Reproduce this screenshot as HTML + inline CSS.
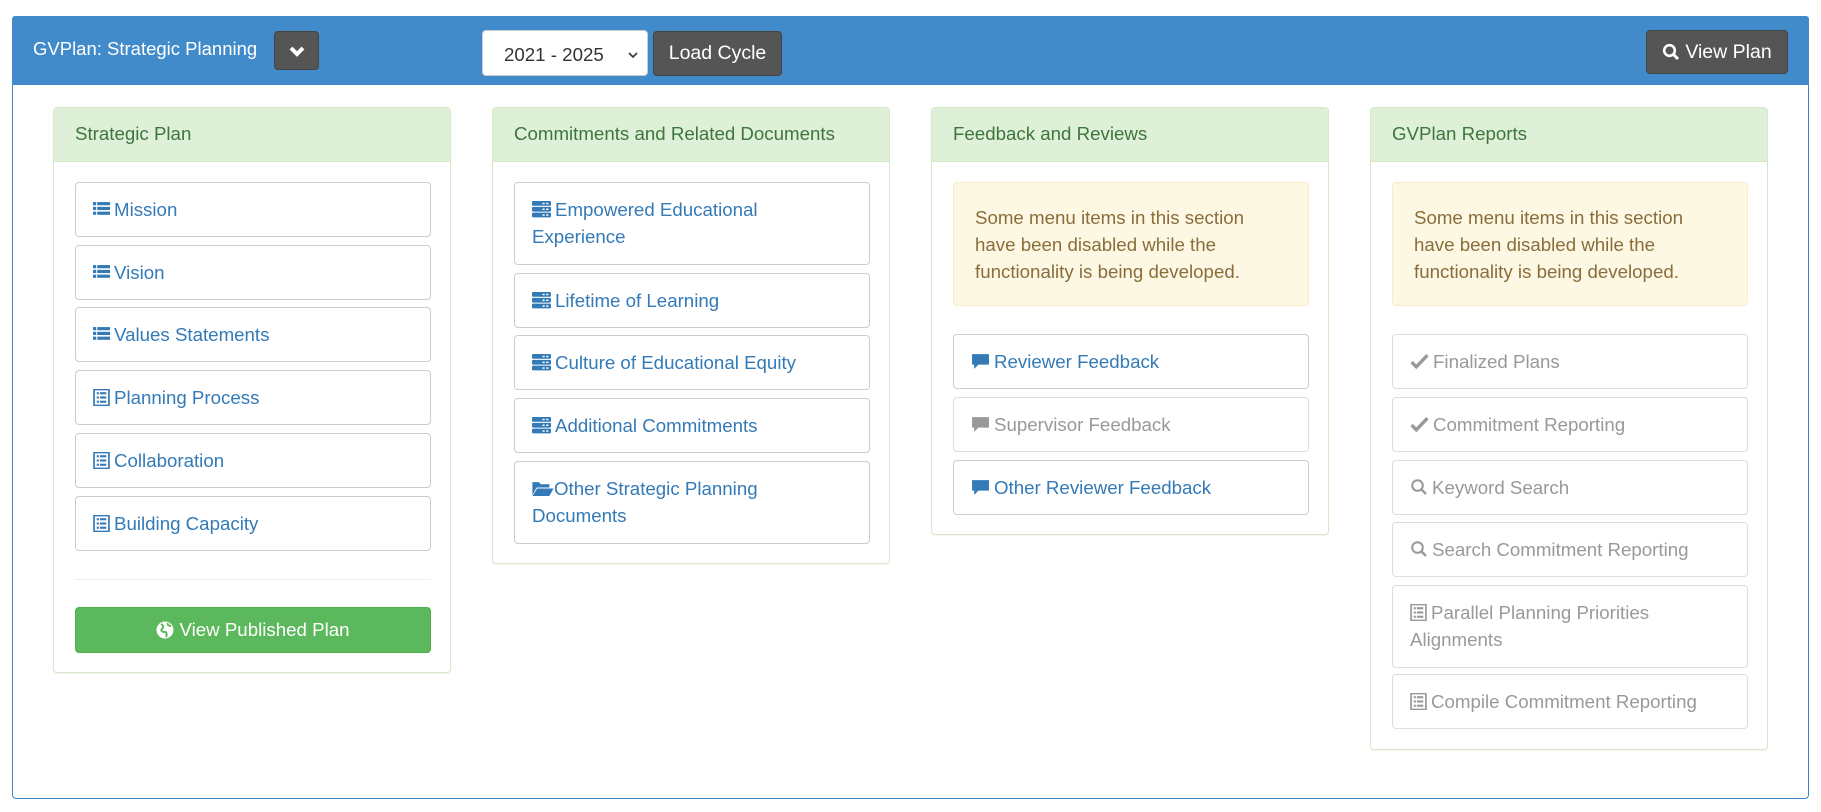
<!DOCTYPE html>
<html><head><meta charset="utf-8">
<style>
*{box-sizing:border-box;margin:0;padding:0}
body{width:1821px;height:812px;background:#fff;font-family:"Liberation Sans",Arial,sans-serif;position:relative;overflow:hidden}
.outer{position:absolute;left:12px;top:16px;width:1797px;height:783px;border:1px solid #3f86c8;border-radius:4px}
.bar{position:absolute;left:12px;top:16px;width:1797px;height:69px;background:#428bca;border-radius:3px 3px 0 0}
.title{position:absolute;left:33px;top:38px;color:#fff;font-size:18.5px}
.dk{position:absolute;background:#555;border-radius:4px;color:#fff;font-size:19.5px;display:flex;align-items:center;justify-content:center;border:1px solid #444}
.sel{position:absolute;left:482px;top:30px;width:166px;height:46px;background:#fff;border-radius:4px;border:1px solid #ccc;font-size:18.7px;color:#333;padding:13px 0 0 21px}
.card{position:absolute;width:398px;border:1px solid #d6e9c6;border-radius:4px;background:#fff;box-shadow:0 1px 1px rgba(0,0,0,.05)}
.ch{height:54px;background:#dff0d8;color:#3c763d;font-size:18.7px;padding:15px 21px;border-bottom:1px solid #d6e9c6;border-radius:3px 3px 0 0}
.it{position:absolute;left:21px;width:356px;border:1px solid #ccc;border-radius:4px;color:#337ab7;font-size:18.7px;line-height:27px;padding:13px 40px 13px 17px}
.it.d{color:#999;border-color:#ddd}
.it svg{vertical-align:-2px;margin-right:4px}
.al{position:absolute;left:21px;width:356px;height:124px;background:#fcf8e3;border:1px solid #faebcc;border-radius:4px;color:#8a6d3b;font-size:18.7px;line-height:27px;padding:21px 50px 21px 21px}
</style></head><body>
<div class="outer"></div>
<div class="bar"></div>
<div class="title">GVPlan: Strategic Planning</div>
<div class="dk" style="left:274px;top:31px;width:45px;height:39px"><svg width="16" height="14" viewBox="0 0 16 14"><path d="M2 4l6 6 6-6" stroke="#fff" stroke-width="4" fill="none"/></svg></div>
<div class="sel">2021 - 2025 <span style="position:absolute;right:8px;top:12px"><svg width="12" height="10" viewBox="0 0 12 10"><path d="M2 3l4 4 4-4" stroke="#333" stroke-width="1.6" fill="none"/></svg></span></div>
<div class="dk" style="left:653px;top:31px;width:129px;height:45px">Load Cycle</div>
<div class="dk" style="left:1646px;top:30px;width:142px;height:44px"><svg width="18" height="18" viewBox="0 0 18 18" style="margin-right:5px"><circle cx="7.5" cy="7.5" r="5.3" stroke="#fff" stroke-width="2.6" fill="none"/><path d="M11.5 11.5l4.5 4.5" stroke="#fff" stroke-width="3"/></svg>View Plan</div>

<svg width="0" height="0" style="position:absolute">
<defs>
<symbol id="list" viewBox="0 0 16 16"><g fill="currentColor"><rect x="0" y="1" width="3" height="3"/><rect x="4" y="1" width="12" height="3"/><rect x="0" y="5.5" width="3" height="3"/><rect x="4" y="5.5" width="12" height="3"/><rect x="0" y="10" width="3" height="3"/><rect x="4" y="10" width="12" height="3"/></g></symbol>
<symbol id="alt" viewBox="0 0 16 16"><rect x="1" y="0.5" width="14" height="15" fill="none" stroke="currentColor" stroke-width="1.6"/><g fill="currentColor"><rect x="3.5" y="3" width="2" height="2"/><rect x="6.5" y="3" width="6" height="2"/><rect x="3.5" y="7" width="2" height="2"/><rect x="6.5" y="7" width="6" height="2"/><rect x="3.5" y="11" width="2" height="2"/><rect x="6.5" y="11" width="6" height="2"/></g></symbol>
<symbol id="srv" viewBox="0 0 18 16"><g fill="currentColor"><rect x="0" y="0" width="18" height="4.5" rx="1"/><rect x="0" y="5.5" width="18" height="4.5" rx="1"/><rect x="0" y="11" width="18" height="4.5" rx="1"/></g><g fill="#fff"><rect x="10" y="1.6" width="2" height="1.4"/><rect x="13.5" y="1.6" width="2" height="1.4"/><rect x="10" y="7.1" width="2" height="1.4"/><rect x="13.5" y="7.1" width="2" height="1.4"/><rect x="10" y="12.6" width="2" height="1.4"/><rect x="13.5" y="12.6" width="2" height="1.4"/></g></symbol>
<symbol id="fold" viewBox="0 0 20 16"><path fill="currentColor" d="M0 2h6l2 2h8v3H4L0 14z M4.5 8H20l-4 7H0z"/></symbol>
<symbol id="cmt" viewBox="0 0 18 16"><path fill="currentColor" d="M1 1h16v10H7l-4 4v-4H1z"/></symbol>
<symbol id="chk" viewBox="0 0 18 16"><path d="M1.5 8.5l4.5 4.5L16.5 2" stroke="currentColor" stroke-width="3.2" fill="none"/></symbol>
<symbol id="srch" viewBox="0 0 18 18"><circle cx="7.5" cy="7.5" r="5.3" stroke="currentColor" stroke-width="2" fill="none"/><path d="M11.5 11.5l4.5 4.5" stroke="currentColor" stroke-width="2.4"/></symbol>
</defs></svg>

<!-- col 1 -->
<div class="card" style="left:53px;top:107px;height:566px">
<div class="ch">Strategic Plan</div>
<div class="it" style="top:74px"><svg width="17" height="17"><use href="#list"/></svg>Mission</div>
<div class="it" style="top:137px"><svg width="17" height="17"><use href="#list"/></svg>Vision</div>
<div class="it" style="top:199px"><svg width="17" height="17"><use href="#list"/></svg>Values Statements</div>
<div class="it" style="top:262px"><svg width="17" height="17"><use href="#alt"/></svg>Planning Process</div>
<div class="it" style="top:325px"><svg width="17" height="17"><use href="#alt"/></svg>Collaboration</div>
<div class="it" style="top:388px"><svg width="17" height="17"><use href="#alt"/></svg>Building Capacity</div>
<div style="position:absolute;left:21px;top:471px;width:356px;border-top:1px solid #eee"></div>
<div style="position:absolute;left:21px;top:499px;width:356px;height:46px;background:#5cb85c;border:1px solid #4cae4c;border-radius:4px;color:#fff;font-size:18.7px;display:flex;align-items:center;justify-content:center"><svg width="18" height="18" viewBox="0 0 18 18" style="margin-right:5px"><circle cx="9" cy="9" r="8.5" fill="#fff"/><path d="M5 3c2 1 3 3 1 5s1 3 3 3 2 3 1 5M12 2c-1 2 1 3 3 3" stroke="#5cb85c" stroke-width="2" fill="none"/></svg>View Published Plan</div>
</div>

<!-- col 2 -->
<div class="card" style="left:492px;top:107px;height:457px">
<div class="ch">Commitments and Related Documents</div>
<div class="it" style="top:74px;height:83px"><svg width="19" height="17"><use href="#srv"/></svg>Empowered Educational<br>Experience</div>
<div class="it" style="top:165px"><svg width="19" height="17"><use href="#srv"/></svg>Lifetime of Learning</div>
<div class="it" style="top:227px"><svg width="19" height="17"><use href="#srv"/></svg>Culture of Educational Equity</div>
<div class="it" style="top:290px"><svg width="19" height="17"><use href="#srv"/></svg>Additional Commitments</div>
<div class="it" style="top:353px;height:83px"><svg width="22" height="17" style="margin-right:0"><use href="#fold"/></svg>Other Strategic Planning<br>Documents</div>
</div>

<!-- col 3 -->
<div class="card" style="left:931px;top:107px;height:428px">
<div class="ch">Feedback and Reviews</div>
<div class="al" style="top:74px">Some menu items in this section<br>have been disabled while the<br>functionality is being developed.</div>
<div class="it" style="top:226px"><svg width="19" height="17"><use href="#cmt"/></svg>Reviewer Feedback</div>
<div class="it d" style="top:289px"><svg width="19" height="17"><use href="#cmt"/></svg>Supervisor Feedback</div>
<div class="it" style="top:352px"><svg width="19" height="17"><use href="#cmt"/></svg>Other Reviewer Feedback</div>
</div>

<!-- col 4 -->
<div class="card" style="left:1370px;top:107px;height:643px">
<div class="ch">GVPlan Reports</div>
<div class="al" style="top:74px">Some menu items in this section<br>have been disabled while the<br>functionality is being developed.</div>
<div class="it d" style="top:226px"><svg width="19" height="17"><use href="#chk"/></svg>Finalized Plans</div>
<div class="it d" style="top:289px"><svg width="19" height="17"><use href="#chk"/></svg>Commitment Reporting</div>
<div class="it d" style="top:352px"><svg width="18" height="18"><use href="#srch"/></svg>Keyword Search</div>
<div class="it d" style="top:414px"><svg width="18" height="18"><use href="#srch"/></svg>Search Commitment Reporting</div>
<div class="it d" style="top:477px;height:83px"><svg width="17" height="17"><use href="#alt"/></svg>Parallel Planning Priorities<br>Alignments</div>
<div class="it d" style="top:566px"><svg width="17" height="17"><use href="#alt"/></svg>Compile Commitment Reporting</div>
</div>
</body></html>
